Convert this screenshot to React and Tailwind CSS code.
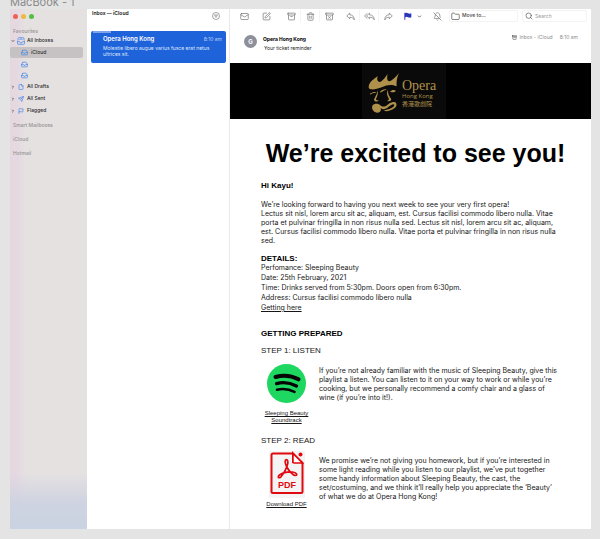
import {
  Archive,
  ArchiveX,
  BellOff,
  ChevronDown,
  ChevronRight,
  File,
  Flag,
  Folder,
  Inbox,
  Mail,
  Search,
  Send,
  SquarePen,
  Trash2,
} from "lucide-react";

const mailboxes = [
  { label: "All Drafts", icon: File },
  { label: "All Sent", icon: Send },
  { label: "Flagged", icon: Flag },
];

function SidebarHeading({ children }) {
  return (
    <h2 className="pl-[3px] text-[5px] leading-[8px] font-medium text-[#969394]">
      {children}
    </h2>
  );
}

function ToolButton({ label, icon: Icon, className = "" }) {
  return (
    <button
      type="button"
      aria-label={label}
      className={`flex h-[12px] w-[19px] shrink-0 items-center justify-center text-[#6b6b6b] ${className}`}
    >
      <Icon className="size-[9px]" strokeWidth={1.75} />
    </button>
  );
}

function ReplyIcon({ className, strokeWidth }) {
  return (
    <svg viewBox="0 0 24 24" className={className} fill="none" stroke="currentColor" strokeWidth={strokeWidth} strokeLinejoin="round">
      <path d="M10 3 L2 10.5 L10 18 V14 C16 14 19 16 22 21 C22 13 18 7.5 10 7.500 Z" />
    </svg>
  );
}

function ReplyAllIcon({ strokeWidth }) {
  return (
    <svg viewBox="0 0 30 24" className="h-[9px] w-[11px]" fill="none" stroke="currentColor" strokeWidth={strokeWidth} strokeLinejoin="round">
      <path d="M15 3 L7 10.500 L15 18 V14 C21 14 25 16 28 21 C28 13 23 7.500 15 7.500 Z" />
      <path d="M9 3.500 L1.500 10.500 L9 17.500" />
    </svg>
  );
}

function ForwardIcon({ className, strokeWidth }) {
  return (
    <svg viewBox="0 0 24 24" className={className} fill="none" stroke="currentColor" strokeWidth={strokeWidth} strokeLinejoin="round">
      <path d="M14 3 L22 10.500 L14 18 V14 C8 14 5 16 2 21 C2 13 6 7.500 14 7.500 Z" />
    </svg>
  );
}

function AllInboxesIcon() {
  return (
    <svg viewBox="0 0 24 24" className="size-[8px] shrink-0" fill="none" stroke="#3b82e8" strokeWidth="2">
      <path d="M3 10 V5 a3 3 0 0 1 3-3 h12 a3 3 0 0 1 3 3 V10" />
      <path d="M1.500 11 v8 a3 3 0 0 0 3 3 h15 a3 3 0 0 0 3-3 v-8" />
      <path d="M2 14 h6 q0 4 4 4 t4-4 h6" />
      <path d="M8 9 a4 3.500 0 0 1 8 0" />
    </svg>
  );
}

function FilterIcon() {
  return (
    <svg viewBox="0 0 24 24" className="size-[8px]" fill="none" stroke="#777" strokeWidth="2">
      <circle cx="12" cy="12" r="10.500" />
      <path d="M6 9 h12 M8 12.500 h8 M10.500 16 h3" />
    </svg>
  );
}

function Sidebar() {
  return (
    <aside className="w-[77px] shrink-0 bg-[linear-gradient(to_top,#c9d3e1_0,#cfd3e1_26px,transparent_56px),linear-gradient(to_right,#e5d7e0_0,#e5d9e1_8px,#e5e1e1_16px)]">
      <div className="flex gap-[3px] pt-[5px] pl-[3px]">
        <span className="size-[5px] rounded-full bg-[#ee6057]" />
        <span className="size-[5px] rounded-full bg-[#f0b83f]" />
        <span className="size-[5px] rounded-full bg-[#54bf42]" />
      </div>

      <nav className="pt-[8px] text-[5px] font-medium text-[#2c2b2c]">
        <SidebarHeading>Favourites</SidebarHeading>
        <a href="#all" className="flex h-[12px] items-center gap-[2px] pl-px">
          <ChevronDown className="size-[4px]" strokeWidth={4} />
          <AllInboxesIcon />
          All Inboxes
        </a>
        <a
          href="#icloud"
          className="mr-[4px] flex h-[11px] items-center gap-[3px] rounded-[2px] bg-[#c6c2c3] pl-[11px]"
        >
          <Inbox className="size-[7px] text-[#3b82e8]" strokeWidth={2.25} />
          iCloud
        </a>
        <a href="#second" aria-label="Second inbox" className="flex h-[12px] items-center pl-[11px]">
          <Inbox className="size-[7px] text-[#3b82e8]" strokeWidth={2.25} />
        </a>
        <a href="#third" aria-label="Third inbox" className="flex h-[11px] items-center pl-[11px]">
          <Inbox className="size-[7px] text-[#3b82e8]" strokeWidth={2.25} />
        </a>
        {mailboxes.map(({ label, icon: Icon }) => (
          <a key={label} href="#mailbox" className="flex h-[12px] items-center gap-[3px] pl-px">
            <ChevronRight className="size-[4px]" strokeWidth={4} />
            <Icon className="size-[6px] text-[#3b82e8]" strokeWidth={2.5} />
            {label}
          </a>
        ))}
        <div className="flex flex-col gap-[6px] pt-[4px]">
          <SidebarHeading>Smart Mailboxes</SidebarHeading>
          <SidebarHeading>iCloud</SidebarHeading>
          <SidebarHeading>Hotmail</SidebarHeading>
        </div>
      </nav>
    </aside>
  );
}

function MessageList() {
  return (
    <section className="w-[143px] shrink-0 border-r border-[#e9e9e9] bg-white">
      <div className="flex h-[22px] justify-between pr-[9px] pl-[5px]">
        <h1 className="text-[5px] leading-[9px] font-bold text-[#333]">Inbox — iCloud</h1>
        <button type="button" aria-label="Filter" className="flex h-[13px] items-center">
          <FilterIcon />
        </button>
      </div>
      <a
        href="#message"
        className="mr-[3px] ml-[4px] block h-[32px] rounded-[2px] bg-[#1f63da] pr-[4px] pl-[12px] text-white"
      >
        <span className="-ml-[10px] block h-[2px] w-[18px] bg-[#7fa4ea]" />
        <span className="flex items-center justify-between pt-[2px]">
          <span className="text-[6px] leading-[8px] font-semibold">Opera Hong Kong</span>
          <span className="text-[5px] leading-[8px] text-[#bcd0f6]">8:10 am</span>
        </span>
        <span className="block pt-[2px] text-[5px] leading-[6px] whitespace-nowrap text-[#dfe9fb]">
          Molestie libero augue varius fusce erat netus
          <br />
          ultrices sit.
        </span>
      </a>
    </section>
  );
}

function Toolbar() {
  return (
    <div className="flex items-center pt-px pr-[4px] pl-[5px]">
      <div className="flex gap-[3px]">
        <ToolButton label="Get mail" icon={Mail} />
        <ToolButton label="New message" icon={SquarePen} />
      </div>
      <div className="flex divide-x divide-[#f4f4f4] pl-[6px]">
        <ToolButton label="Archive" icon={Archive} />
        <ToolButton label="Delete" icon={Trash2} />
        <ToolButton label="Junk" icon={ArchiveX} />
      </div>
      <div className="flex divide-x divide-[#f4f4f4] pl-[2px]">
        <ToolButton label="Reply" icon={ReplyIcon} />
        <ToolButton label="Reply all" icon={ReplyAllIcon} />
        <ToolButton label="Forward" icon={ForwardIcon} />
      </div>
      <button type="button" aria-label="Flag" className="flex h-[12px] w-[19px] items-center justify-center">
        <svg viewBox="0 0 24 24" className="size-[8px]" fill="#2a36b8">
          <path d="M1 2 H4 V3 Q8 1 12 3.500 T22 4 V16 Q17 18 12 15.500 T4 15.500 V23 H1 Z" />
        </svg>
      </button>
      <button type="button" aria-label="Flag colours" className="flex h-[12px] w-[5px] items-center">
        <ChevronDown className="size-[5px] text-[#444]" strokeWidth={3.5} />
      </button>
      <ToolButton label="Mute" icon={BellOff} className="ml-[6px]" />
      <button
        type="button"
        className="ml-[2px] flex h-[12px] w-[69px] items-center gap-[2px] rounded-[2px] border border-[#f3f3f3] pl-px text-[5px] font-medium text-[#444]"
      >
        <Folder className="size-[9px]" strokeWidth={1.75} />
        Move to...
      </button>
      <label className="ml-[4px] flex h-[12px] min-w-0 flex-1 items-center gap-[2px] rounded-[2px] border border-[#f3f3f3] pl-[2px]">
        <Search className="size-[8px] shrink-0 text-[#555]" strokeWidth={2} />
        <input
          type="text"
          placeholder="Search"
          aria-label="Search"
          className="w-full min-w-0 bg-transparent text-[5px] leading-[8px] outline-none placeholder:text-[#999]"
        />
      </label>
    </div>
  );
}

function MessageHeader() {
  return (
    <header className="flex h-[41px] items-start pt-[13px] pr-[13px] pl-[14px]">
      <span className="flex size-[13px] items-center justify-center rounded-full bg-[#8d8f9b] text-[6px] font-bold text-white">
        G
      </span>
      <div className="flex-1 pl-[6px] text-[5px] leading-[9px]">
        <p className="font-bold text-black">Opera Hong Kong</p>
        <p className="pl-px text-[#222]">Your ticket reminder</p>
      </div>
      <div className="flex items-center gap-[2px] text-[5px] leading-[5px] text-[#8c8c8c]">
        <Archive className="size-[5px] text-[#444]" strokeWidth={2.5} />
        Inbox - iCloud
        <span className="pl-[5px]">8:10 am</span>
      </div>
    </header>
  );
}

// crowned face with the pipe-shaped mouth
function OperaMark() {
  return (
    <svg viewBox="430 36 96 126" className="h-[42px] w-[32px] shrink-0" fill="#b0914c">
      <path d="M432 80 C434 64 448 58 459 48 C456 58 458 64 464 66 C474 64 482 52 489 41 C486 54 487 62 493 64 C504 62 514 50 523 39 C516 54 515 66 516 79 C498 72 486 76 473 81 C459 87 447 89 439 88 C434 87 432 84 432 80 Z" />
      <path d="M436 101 C443 97 449 95 456 97 L449 99 C444 99 441 101 436 104 Z" />
      <path d="M459 91 C461 100 458 108 455 115 C452 120 457 121 463 122 C457 126 449 125 448 119 C450 112 458 103 459 91 Z" />
      <path d="M467 94 C473 89 480 88 487 88 C480 91 474 94 467 98 Z" />
      <path d="M490 89 C489 101 494 109 499 116 C502 121 496 125 487 123 C492 121 494 119 492 115 C487 107 485 98 490 89 Z" />
      <path d="M496 95 C503 89 508 89 514 93 C509 98 503 98 496 95 Z" />
      <path d="M444 136 C449 130 460 130 466 135 C474 142 480 141 489 134 C499 126 511 123 515 131 C519 142 503 151 484 154 L477 151 C493 149 509 142 509 135 C507 129 498 135 491 141 C483 148 475 150 468 144 C471 152 466 159 457 158 C445 157 439 144 444 136 Z" />
    </svg>
  );
}

function Banner() {
  return (
    <div className="flex h-[56px] justify-center bg-black pr-[13px]">
      <div className="flex w-[84px] items-start gap-[2px] bg-[#0a0a0a] pt-[9px] pl-[6px] text-[#b0914c]">
        <OperaMark />
        <div className="pt-[7px] whitespace-nowrap">
          <p className="font-['Liberation_Serif',serif] text-[14px] leading-[14px]">Opera</p>
          <p className="font-['Open_Sans',sans-serif] text-[6px] leading-[7px]">Hong Kong</p>
          <p lang="zh-HK" className="font-['Noto_Sans_CJK_TC',sans-serif] text-[6px] leading-[8px]">
            香港歌劇院
          </p>
        </div>
      </div>
    </div>
  );
}

function SpotifyIcon() {
  return (
    <svg viewBox="0 0 39 39" className="size-[39px]" fill="none" stroke="#050505" strokeLinecap="round">
      <circle cx="19.500" cy="19.500" r="19.500" fill="#1ed760" stroke="none" />
      <path d="M8.500 13 C16 10.800 25 11.800 31.500 15.300" strokeWidth="4" />
      <path d="M9.500 19.600 C16 17.800 23.500 18.800 29.500 22" strokeWidth="3.300" />
      <path d="M10 25.700 C16 24.300 22 25 27.500 27.800" strokeWidth="2.600" />
    </svg>
  );
}

function PdfIcon() {
  return (
    <svg viewBox="0 0 36 47" className="h-[47px] w-[36px]" fill="none" stroke="#e0090f">
      <rect width="36" height="47" fill="#f4f4f4" stroke="none" />
      <path d="M24 2.500 H4 Q2.500 2.500 2.500 4 V40.500 Q2.500 42 4 42 H32 Q33.500 42 33.500 40.500 V12 L24 2.500 V11 H33.500" strokeWidth="2" />
      <path d="M24 2.500 L33.500 12 H25 Q24 12 24 11 Z" strokeWidth="1.500" fill="#fff" />
      <circle cx="31.500" cy="3.500" r="2" fill="#e0090f" stroke="none" />
      <path
        d="M17.500 8.700 C15.500 8.700 16 12.500 17.600 15.500 C19.500 19.300 23.500 24.500 26.500 24.500 C29 24 27.500 21.300 23.500 21 C19 20.700 13.500 22 10.500 24 C8 26 9.800 28 12 25.800 C15 22.500 18.300 16 18.800 12.500 C19 10 18.600 8.700 17.500 8.700 Z"
        strokeWidth="1.700"
        strokeLinejoin="round"
      />
      <text
        x="18"
        y="37"
        textAnchor="middle"
        fontSize="9"
        fill="#e0090f"
        stroke="none"
        className="font-['Liberation_Sans',Arial,sans-serif] font-bold"
      >
        PDF
      </text>
    </svg>
  );
}

function MessageBody() {
  return (
    <article className="pb-[21px]">
      <Banner />
      <h2 className="pt-[19px] pr-[21px] pl-[31px] text-center font-['Liberation_Sans',Arial,sans-serif] text-[25px] leading-[30px] font-bold text-black">
        We’re excited to see you!
      </h2>
      <div className="pr-[8px] pl-[31px] text-[7px] leading-[9px] text-[#161616]">
        <p className="pt-[13px] font-['Liberation_Sans',Arial,sans-serif] text-[8px] leading-[9px] font-bold text-black">
          Hi Kayu!
        </p>
        <p className="pt-[10px]">
          We’re looking forward to having you next week to see your very first opera!
          <br />
          Lectus sit nisl, lorem arcu sit ac, aliquam, est. Cursus facilisi commodo libero nulla. Vitae
          <br />
          porta et pulvinar fringilla in non risus nulla sed. Lectus sit nisl, lorem arcu sit ac, aliquam,
          <br />
          est. Cursus facilisi commodo libero nulla. Vitae porta et pulvinar fringilla in non risus nulla
          <br />
          sed.
        </p>

        <div className="pt-[9px] leading-[10px]">
          <h3 className="font-['Liberation_Sans',Arial,sans-serif] text-[8px] leading-[9px] font-bold text-black">
            DETAILS:
          </h3>
          <p>Perfomance: Sleeping Beauty</p>
          <p>Date: 25th February, 2021</p>
          <p>Time: Drinks served from 5:30pm. Doors open from 6:30pm.</p>
          <p>Address: Cursus facilisi commodo libero nulla</p>
          <a href="#directions" className="block underline">
            Getting here
          </a>
        </div>

        <h3 className="pt-[16px] font-['Liberation_Sans',Arial,sans-serif] text-[8px] leading-[9px] font-bold text-black">
          GETTING PREPARED
        </h3>

        <h4 className="pt-[8px] font-['Liberation_Sans',Arial,sans-serif] text-[8px] leading-[9px]">
          STEP 1: LISTEN
        </h4>
        <div className="flex gap-[7px] pt-[9px]">
          <a
            href="#soundtrack"
            className="flex w-[51px] shrink-0 flex-col items-center gap-[7px] text-center font-['Liberation_Sans',Arial,sans-serif] text-[6px] leading-[7px] underline"
          >
            <SpotifyIcon />
            <span>
              Sleeping Beauty
              <br />
              Soundtrack
            </span>
          </a>
          <p className="pt-[2px]">
            If you’re not already familiar with the music of Sleeping Beauty, give this
            <br />
            playlist a listen. You can listen to it on your way to work or while you’re
            <br />
            cooking, but we personally recommend a comfy chair and a glass of
            <br />
            wine (if you’re into it!).
          </p>
        </div>

        <h4 className="pt-[12px] font-['Liberation_Sans',Arial,sans-serif] text-[8px] leading-[9px]">
          STEP 2: READ
        </h4>
        <div className="flex gap-[7px] pt-[6px]">
          <a
            href="#pdf"
            className="flex w-[51px] shrink-0 flex-col items-center gap-[3px] text-center font-['Liberation_Sans',Arial,sans-serif] text-[6px] leading-[7px] underline"
          >
            <PdfIcon />
            <span>Download PDF</span>
          </a>
          <p className="pt-[5px]">
            We promise we’re not giving you homework, but if you’re interested in
            <br />
            some light reading while you listen to our playlist, we’ve put together
            <br />
            some handy information about Sleeping Beauty, the cast, the
            <br />
            set/costuming, and we think it’ll really help you appreciate the ‘Beauty’
            <br />
            of what we do at Opera Hong Kong!
          </p>
        </div>
      </div>
    </article>
  );
}

export default function App() {
  return (
    <div className="flex min-h-screen flex-col bg-[#e4e4e4] pr-[9px] pb-[10px] pl-[10px] font-['Inter',sans-serif]">
      <div className="flex h-[9px] items-end overflow-hidden text-[11px] leading-[14px] text-[#8a8a8a]">
        MacBook - 1
      </div>
      <main className="flex flex-1 bg-white">
        <Sidebar />
        <MessageList />
        <section className="min-w-0 flex-1">
          <Toolbar />
          <MessageHeader />
          <MessageBody />
        </section>
      </main>
    </div>
  );
}
